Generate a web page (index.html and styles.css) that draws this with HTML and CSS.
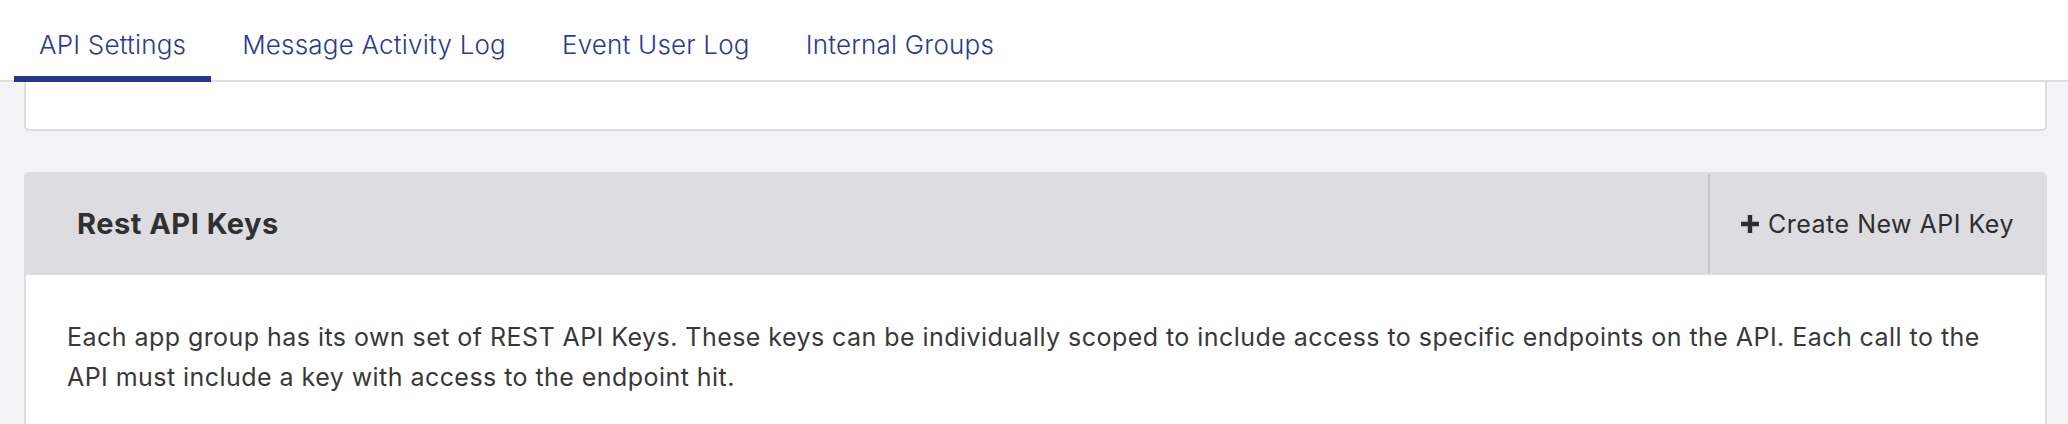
FILE: index.html
```html
<!DOCTYPE html>
<html lang="en">
<head>
<meta charset="utf-8">
<title>API Settings</title>
<link rel="stylesheet" href="styles.css">
</head>
<body>
<nav class="tabs">
  <a class="tab tab-active">API Settings</a>
  <a class="tab">Message Activity Log</a>
  <a class="tab">Event User Log</a>
  <a class="tab">Internal Groups</a>
</nav>
<main class="content">
  <section class="card card-cut"></section>
  <section class="card panel">
    <header class="panel-head">
      <h2 class="panel-title">Rest API Keys</h2>
      <button class="create-btn" type="button">
        <svg class="plus" viewBox="0 0 18 18" width="18" height="18" aria-hidden="true"><path d="M6.8 0h4.4v6.8H18v4.4h-6.8V18H6.8v-6.8H0V6.8h6.8z" fill="#2e2e30"/></svg>
        <span>Create New API Key</span>
      </button>
    </header>
    <div class="panel-body">
      <p class="desc">Each app group has its own set of REST API Keys. These keys can be individually scoped to include access to specific endpoints on the API. Each call to the API must include a key with access to the endpoint hit.</p>
    </div>
  </section>
</main>
</body>
</html>
```
FILE: styles.css
```css
html, body {
  margin: 0;
  padding: 0;
  background: #f3f3f5;
  font-family: "Inter", "Liberation Sans", sans-serif;
  overflow: hidden;
}

.tabs {
  display: flex;
  gap: 6px;
  height: 80px;
  padding-left: 14px;
  background: #ffffff;
  border-bottom: 2px solid #dcdce1;
}

.tab {
  position: relative;
  display: flex;
  align-items: center;
  padding: 8px 25px 0 25px;
  font-size: 26px;
  font-weight: 300;
  letter-spacing: 0.2px;
  color: #2b3a8f;
  white-space: nowrap;
}

.tab-active::after {
  content: "";
  position: absolute;
  left: 0;
  right: 0;
  bottom: -2px;
  height: 6px;
  background: #27348b;
}

.content {
  padding: 0 21px 0 24px;
}

.card {
  background: #ffffff;
  border: 2px solid #dcdce1;
  border-radius: 5px;
}

.card-cut {
  height: 47px;
  border-top: none;
  border-top-left-radius: 0;
  border-top-right-radius: 0;
}

.panel {
  margin-top: 41px;
  border-top: none;
  overflow: hidden;
}

.panel-head {
  display: flex;
  align-items: stretch;
  height: 103px;
  background: #dddce1;
}

.panel-title {
  flex: 1;
  display: flex;
  align-items: center;
  margin: 0;
  padding-left: 51px;
  font-size: 29px;
  font-weight: 700;
  letter-spacing: 0.5px;
  color: #303032;
}

.create-btn {
  display: flex;
  align-items: center;
  gap: 9px;
  margin: 2px 0;
  padding: 0 31px 0 31px;
  background: transparent;
  border: none;
  border-left: 2px solid #c6c6cb;
  font-family: inherit;
  font-size: 25px;
  font-weight: 400;
  letter-spacing: 0.5px;
  color: #2e2e30;
}

.plus {
  flex: none;
}

.panel-body {
  padding: 42px 41px 40px 41px;
}

.desc {
  margin: 0;
  font-size: 25px;
  line-height: 40px;
  letter-spacing: 0.45px;
  color: #38383a;
}
```
